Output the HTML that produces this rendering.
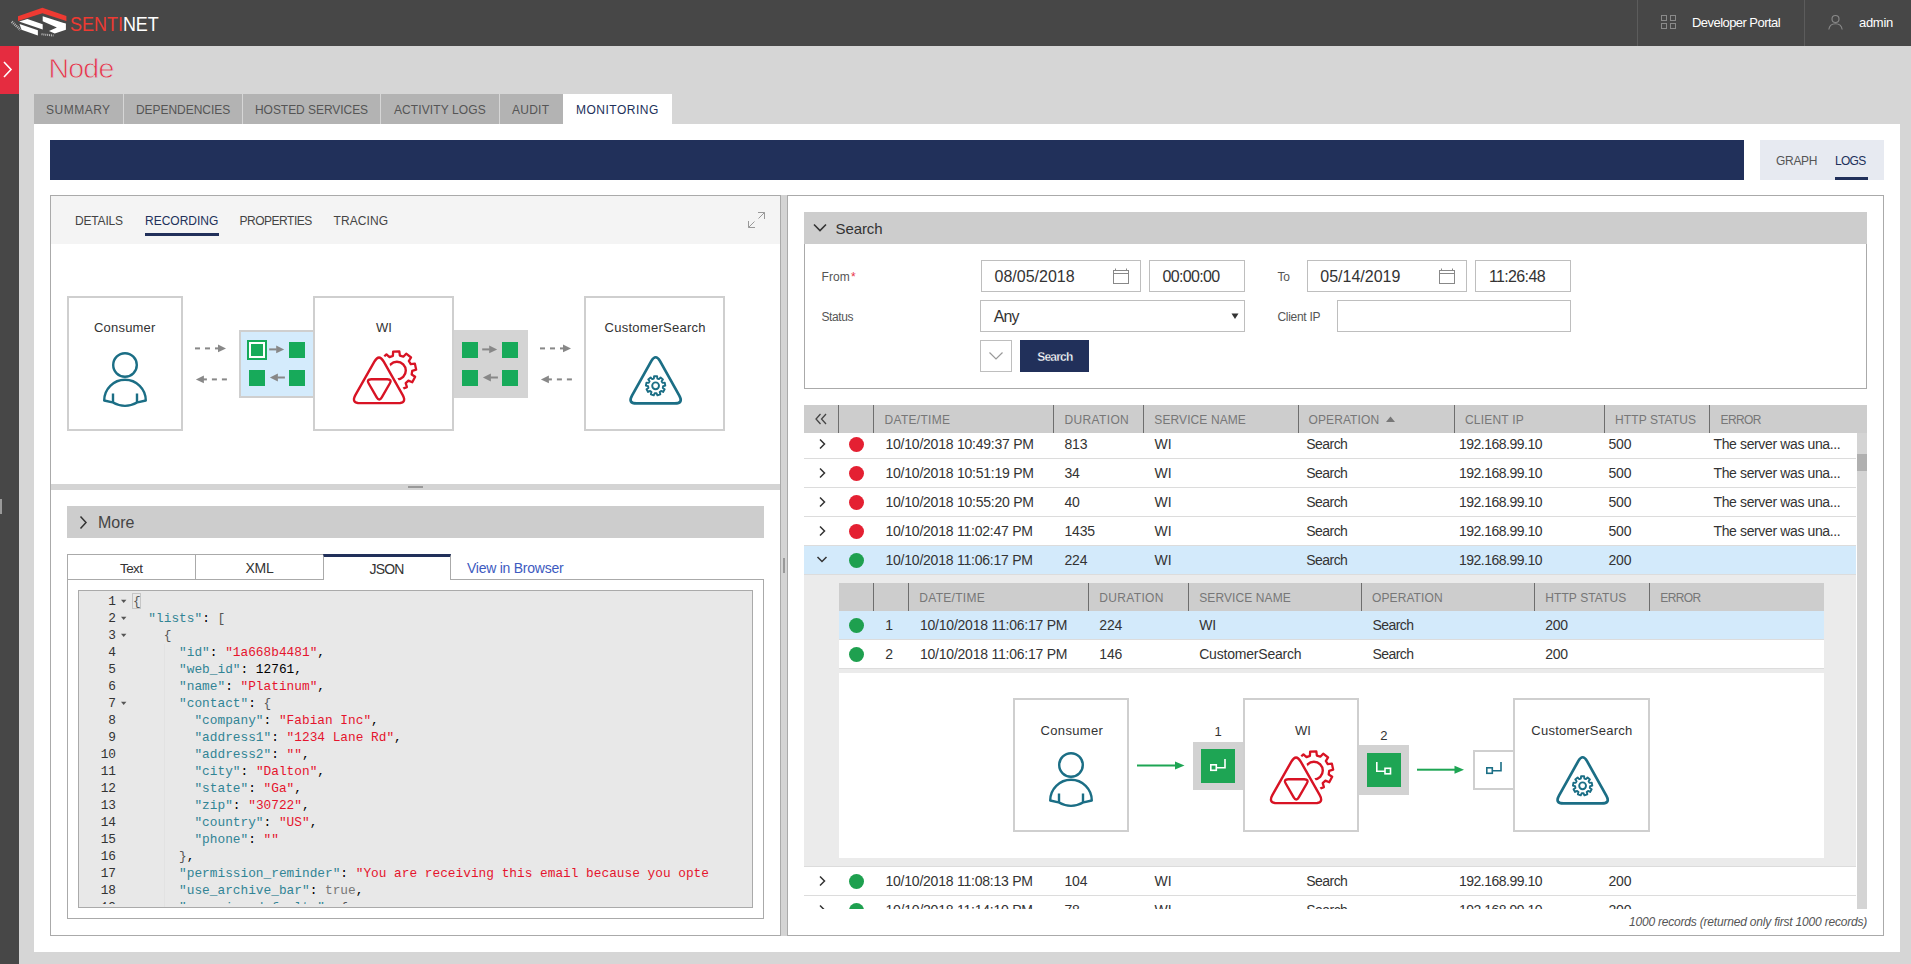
<!DOCTYPE html>
<html><head><meta charset="utf-8">
<style>
*{box-sizing:border-box;margin:0;padding:0}
html,body{width:1911px;height:964px;overflow:hidden;background:#d6d6d6;font-family:"Liberation Sans",sans-serif;color:#333}
.a{position:absolute}
.t{position:absolute;white-space:nowrap;line-height:1}
svg{position:absolute;overflow:visible}
#hdr{left:0;top:0;width:1911px;height:46px;background:#474747}
#side{left:0;top:46px;width:19px;height:918px;background:#474747}
#sidered{left:0;top:46px;width:19px;height:48px;background:#e52c40}
.tab{position:absolute;top:94px;height:30px;background:#b3b3b3;color:#555;font-size:12px;letter-spacing:0.9px}
.tab span{position:absolute;top:10px;line-height:1;white-space:nowrap}
#white{left:34px;top:124px;width:1866px;height:828px;background:#fff}
#navy{left:50px;top:140px;width:1694px;height:40px;background:#21305a}
#gl{left:1760px;top:140px;width:124px;height:40px;background:#e7eaf1}
#lp{left:50px;top:195px;width:731px;height:741px;border:1px solid #aaa;background:#fff}
#split{left:781px;top:195px;width:6px;height:741px;background:#d4d4d4}
#rp{left:787px;top:195px;width:1097px;height:741px;border:1px solid #aaa;background:#fff}
.k{color:#318495}.s{color:#e5142d}.g{color:#555}.c{color:#777}
.up{font-size:12px;letter-spacing:0.9px;color:#444}
</style></head><body>
<svg width="0" height="0" style="position:absolute;left:0;top:0">
 <defs>
  <symbol id="person" overflow="visible">
   <g fill="none" stroke="#1b6e85" stroke-width="2.4" stroke-linejoin="round">
    <circle cx="58" cy="69" r="11.8"/>
    <path d="M37.2,104.5 A20.8,20.8 0 0 1 78.8,104.5 L70.5,106.3 Q58,113.5 45.5,106.3 Z"/>
    <path d="M46,97.5 V106.3 M70,97.5 V106.3"/>
   </g>
  </symbol>
    <symbol id="wi" overflow="visible">
   <g fill="none" stroke="#d81324" stroke-linejoin="round" stroke-linecap="round">
    <path d="M79.89,59.84 L80.15,55.67 L86.32,55.45 L86.87,59.59 L90.32,60.71 L93.20,57.69 L98.06,61.49 L95.82,65.01 L97.74,68.09 L101.89,67.62 L103.18,73.66 L99.20,74.92 L98.69,78.51 L102.17,80.82 L99.27,86.27 L95.41,84.68 L92.72,87.10 L93.90,91.11 L88.18,93.42 L86.24,89.72 L82.62,89.85 L80.95,93.67 L75.08,91.77 L75.97,87.69 L73.12,85.46 L69.38,87.31 L66.11,82.08 L69.42,79.53 L68.66,75.99 L64.60,75.00 L65.46,68.89 L69.64,69.07 L71.34,65.87 L68.86,62.51 L73.45,58.38 L76.53,61.19 Z" stroke-width="2.3"/>
    <circle cx="83.9" cy="74.6" r="8.9" stroke-width="2.4"/>
    <path d="M70.74,65.56 L89.61,98.84 Q94.30,107.10 84.80,107.10 L47.30,107.10 Q37.80,107.10 42.49,98.84 L61.36,65.56 Q66.05,57.30 70.74,65.56 Z" fill="#fff" stroke="#fff" stroke-width="7.5"/>
    <path d="M70.74,65.56 L89.61,98.84 Q94.30,107.10 84.80,107.10 L47.30,107.10 Q37.80,107.10 42.49,98.84 L61.36,65.56 Q66.05,57.30 70.74,65.56 Z" stroke-width="2.4"/>
    <path d="M58.20,83.20 L74.30,83.20 Q79.30,83.20 76.78,87.52 L68.77,101.28 Q66.25,105.60 63.73,101.28 L55.72,87.52 Q53.20,83.20 58.20,83.20 Z" stroke-width="2.4"/>
   </g>
  </symbol>
  <symbol id="cs" overflow="visible">
   <g fill="none" stroke="#1b6e85" stroke-linejoin="round">
    <path d="M76.04,65.15 L95.31,99.60 Q99.70,107.45 90.70,107.45 L52.60,107.45 Q43.60,107.45 47.99,99.60 L67.26,65.15 Q71.65,57.30 76.04,65.15 Z" stroke-width="2.7"/>
    <g transform="translate(71.6,89.8)" stroke-width="1.9">
     <circle r="3.4"/>
     <path d="M-1.71,-7.30 L-1.55,-9.58 L1.55,-9.58 L1.71,-7.30 L3.38,-6.69 L4.97,-8.33 L7.34,-6.34 L6.01,-4.49 L6.89,-2.95 L9.16,-3.19 L9.70,-0.14 L7.49,0.42 L7.18,2.17 L9.07,3.44 L7.52,6.13 L5.47,5.13 L4.11,6.28 L4.73,8.47 L1.82,9.53 L0.89,7.45 L-0.89,7.45 L-1.82,9.53 L-4.73,8.47 L-4.11,6.28 L-5.47,5.13 L-7.52,6.13 L-9.07,3.44 L-7.18,2.17 L-7.49,0.42 L-9.70,-0.14 L-9.16,-3.19 L-6.89,-2.95 L-6.01,-4.49 L-7.34,-6.34 L-4.97,-8.33 L-3.38,-6.69 Z"/>
    </g>
   </g>
  </symbol>
  <symbol id="dashr" overflow="visible"><g fill="#888"><rect x="0" y="-1" width="5" height="2"/><rect x="10" y="-1" width="5" height="2"/><rect x="20" y="-1" width="4" height="2"/><path d="M23,-3.8 L31,0 L23,3.8 Z"/></g></symbol>
  <symbol id="dashl" overflow="visible"><g fill="#888"><path d="M0,0 L8,-3.9 L8,3.9 Z"/><rect x="7" y="-1" width="4" height="2"/><rect x="16" y="-1" width="5" height="2"/><rect x="26" y="-1" width="5" height="2"/></g></symbol>
  <symbol id="arrr" overflow="visible"><g fill="#888"><rect x="0" y="-1" width="7.5" height="2"/><path d="M7,-3.8 L15,0 L7,3.8 Z"/></g></symbol>
  <symbol id="arrl" overflow="visible"><g fill="#888"><path d="M0,0 L8,-4 L8,4 Z"/><rect x="7.5" y="-1" width="7.5" height="2"/></g></symbol>
 </defs>
</svg>

<!-- HEADER -->
<div class="a" id="hdr"></div>
<svg style="left:0;top:0" width="160" height="46" viewBox="0 0 160 46">
  <polygon points="18,16.3 42.4,7.7 66.4,16.1 66.4,21 42.4,13.3 18,21" fill="#ee3a32"/>
  <polygon points="19,21.6 27.4,18.9 42.7,24.2 42.7,29.4" fill="#fff"/>
  <polygon points="19.5,24 37.9,30.2 37.9,35.4 21.5,29.8" fill="#fff"/>
  <polygon points="42.7,16.3 62.9,22.7 65.9,23.4 65.9,29.8 54.7,33.5 49,31 56.9,27.5 42.7,21.2" fill="#fff"/>
  <path d="M11.8,21.8 L20.5,29.8" stroke="#bdbdbd" stroke-width="2.6" stroke-dasharray="1,0.9"/><path d="M41.5,34.2 L53.5,35.6" stroke="#bdbdbd" stroke-width="2" stroke-dasharray="1,0.9"/>
</svg>
<div class="t" style="left:69.5px;top:12.8px;font-size:21px;transform-origin:0 0;transform:scaleX(0.855);letter-spacing:0px"><span style="color:#ee3a32">SENTI</span><span style="color:#fff">NET</span></div>

<div class="a" style="left:1637px;top:0;width:1px;height:46px;background:#5c5c5c"></div>
<div class="a" style="left:1804px;top:0;width:1px;height:46px;background:#5c5c5c"></div>
<svg style="left:1661px;top:15px" width="16" height="15" viewBox="0 0 16 15">
  <g fill="none" stroke="#8a8a8a" stroke-width="1"><rect x="0.5" y="0.5" width="5" height="5"/><rect x="9.5" y="0.5" width="5" height="5"/><rect x="0.5" y="8.5" width="5" height="5"/><rect x="9.5" y="8.5" width="5" height="5"/></g>
</svg>
<div class="t" style="left:1692px;top:16.2px;font-size:13px;color:#fff;letter-spacing:-0.55px">Developer Portal</div>
<svg style="left:1828px;top:15px" width="16" height="15" viewBox="0 0 16 15">
  <g fill="none" stroke="#8a8a8a" stroke-width="1.1"><circle cx="7.5" cy="4" r="3.5"/><path d="M0.8,14.5 C1.5,10 4,8.7 7.5,8.7 C11,8.7 13.5,10 14.2,14.5"/></g>
</svg>
<div class="t" style="left:1859px;top:16.2px;font-size:13px;color:#fff;letter-spacing:-0.3px">admin</div>

<!-- SIDEBAR -->
<div class="a" id="side"></div>
<div class="a" id="sidered"></div>
<svg style="left:3px;top:61px" width="10" height="18" viewBox="0 0 10 18"><path d="M1,1 L8,8.5 L1,16" fill="none" stroke="#fff" stroke-width="1.6"/></svg>
<div class="a" style="left:0;top:499px;width:2px;height:15px;background:#9a9a9a"></div>

<!-- TITLE -->
<div class="t" style="left:48.5px;top:53.6px;font-size:28.5px;color:#e8334a;letter-spacing:-0.8px;-webkit-text-stroke:0.8px #d6d6d6">Node</div>

<!-- TABS -->
<div class="a" id="white"></div>
<div class="tab" style="left:34px;width:89px;letter-spacing:0.5px"><span style="left:12px">SUMMARY</span></div>
<div class="tab" style="left:124px;width:118px;letter-spacing:-0.05px"><span style="left:12px">DEPENDENCIES</span></div>
<div class="tab" style="left:243px;width:137px;letter-spacing:-0.05px"><span style="left:12px">HOSTED SERVICES</span></div>
<div class="tab" style="left:381px;width:118px;letter-spacing:0.1px"><span style="left:13px">ACTIVITY LOGS</span></div>
<div class="tab" style="left:500px;width:63px;letter-spacing:0.25px"><span style="left:12px">AUDIT</span></div>
<div class="tab" style="left:563px;width:109px;background:#fff;color:#21305a;letter-spacing:0.5px"><span style="left:13px">MONITORING</span></div>

<div class="a" id="navy"></div>
<div class="a" id="gl"></div>
<div class="t up" style="left:1776px;top:155px;color:#555;letter-spacing:-0.3px">GRAPH</div>
<div class="t up" style="left:1835px;top:155px;color:#21305a;letter-spacing:-0.7px">LOGS</div>
<div class="a" style="left:1835px;top:177px;width:33px;height:3px;background:#21305a"></div>

<div class="a" id="lp"></div>
<div class="a" id="split"></div>
<div class="a" style="left:783px;top:558px;width:2px;height:15px;background:#999"></div>
<div class="a" id="rp"></div>
<!-- LEFT PANEL -->
<div class="a" style="left:51px;top:196px;width:729px;height:48px;background:#f4f4f4"></div>
<div class="t up" style="left:75px;top:214.5px;letter-spacing:-0.18px">DETAILS</div>
<div class="t up" style="left:145px;top:214.5px;color:#21305a;letter-spacing:0px">RECORDING</div>
<div class="a" style="left:145px;top:233px;width:74px;height:3px;background:#21305a"></div>
<div class="t up" style="left:239.5px;top:214.5px;letter-spacing:-0.48px">PROPERTIES</div>
<div class="t up" style="left:333.5px;top:214.5px;letter-spacing:0.1px">TRACING</div>
<svg style="left:747px;top:211px" width="19" height="18" viewBox="0 0 19 18"><g fill="none" stroke="#999" stroke-width="1"><path d="M11,1.5 H17.5 V8 M17.5,1.5 L11.5,7.5"/><path d="M1.5,10 V16.5 H8 M1.5,16.5 L7.5,10.5"/></g></svg>

<!-- graph -->
<div class="a" style="left:67px;top:296px;width:116px;height:135px;border:2px solid #cfcfcf;background:#fff"></div>
<div class="t" style="left:94px;top:321px;font-size:13px;letter-spacing:0.2px;color:#333">Consumer</div>
<svg style="left:67px;top:296px" width="116" height="135"><use href="#person"/></svg>

<svg style="left:190px;top:340px" width="45" height="45" viewBox="0 0 45 45"><use href="#dashr" x="5" y="8.4"/><use href="#dashl" x="5.9" y="39.4"/></svg>

<div class="a" style="left:239px;top:330px;width:76px;height:68px;border:2px solid #cfcfcf;border-right:none;background:#d4ebfc"></div>
<div class="a" style="left:247px;top:340px;width:20px;height:20px;border:2px solid #17aa5a;background:#fff;padding:2px"><div style="width:12px;height:12px;background:#17aa5a"></div></div>
<div class="a" style="left:289px;top:342px;width:16px;height:16px;background:#17aa5a"></div>
<div class="a" style="left:249px;top:370px;width:16px;height:16px;background:#17aa5a"></div>
<div class="a" style="left:289px;top:370px;width:16px;height:16px;background:#17aa5a"></div>
<svg style="left:265px;top:340px" width="24" height="46" viewBox="0 0 24 46"><use href="#arrr" x="4.2" y="9.4"/><use href="#arrl" x="4.9" y="37.5"/></svg>

<div class="a" style="left:313px;top:296px;width:141px;height:135px;border:2px solid #cfcfcf;background:#fff"></div>
<div class="t" style="left:376px;top:321px;font-size:13px;color:#333">WI</div>
<svg style="left:313px;top:296px" width="141" height="135"><use href="#wi"/></svg>

<div class="a" style="left:454px;top:330px;width:74px;height:68px;background:#d4d4d4"></div>
<div class="a" style="left:462px;top:342px;width:16px;height:16px;background:#17aa5a"></div>
<div class="a" style="left:502px;top:342px;width:16px;height:16px;background:#17aa5a"></div>
<div class="a" style="left:462px;top:370px;width:16px;height:16px;background:#17aa5a"></div>
<div class="a" style="left:502px;top:370px;width:16px;height:16px;background:#17aa5a"></div>
<svg style="left:478px;top:340px" width="24" height="46" viewBox="0 0 24 46"><use href="#arrr" x="4.2" y="9.4"/><use href="#arrl" x="4.9" y="37.5"/></svg>

<svg style="left:535px;top:340px" width="45" height="45" viewBox="0 0 45 45"><use href="#dashr" x="5" y="8.4"/><use href="#dashl" x="5.9" y="39.4"/></svg>

<div class="a" style="left:584px;top:296px;width:141px;height:135px;border:2px solid #cfcfcf;background:#fff"></div>
<div class="t" style="left:604.5px;top:321px;font-size:13px;letter-spacing:0.27px;color:#333">CustomerSearch</div>
<svg style="left:584px;top:296px" width="141" height="135"><use href="#cs"/></svg>

<!-- splitter -->
<div class="a" style="left:51px;top:484px;width:729px;height:6px;background:#d4d4d4"></div>
<div class="a" style="left:408px;top:486px;width:15px;height:2px;background:#999"></div>

<!-- More -->
<div class="a" style="left:67px;top:506px;width:697px;height:32px;background:#cdcdcd"></div>
<svg style="left:78px;top:515px" width="10" height="15" viewBox="0 0 10 15"><path d="M2.5,1.5 L8,7.5 L2.5,13.5" fill="none" stroke="#333" stroke-width="1.5"/></svg>
<div class="t" style="left:98px;top:515px;font-size:16px;color:#444">More</div>

<!-- format tabs -->
<div class="a" style="left:67px;top:579px;width:697px;height:340px;border:1px solid #aaa"></div>
<div class="a" style="left:67px;top:554px;width:129px;height:26px;border:1px solid #aaa;background:#fff"></div>
<div class="a" style="left:195px;top:554px;width:129px;height:26px;border:1px solid #aaa;background:#fff"></div>
<div class="a" style="left:323px;top:554px;width:128px;height:26px;border:1px solid #aaa;border-top:3px solid #21305a;border-bottom:none;background:#fff"></div>
<div class="t" style="left:120px;top:561px;font-size:14px;color:#333;letter-spacing:-0.6px;font-size:13.5px;top:561.5px">Text</div>
<div class="t" style="left:245.5px;top:561px;font-size:14px;color:#333;letter-spacing:-0.3px">XML</div>
<div class="t" style="left:369.5px;top:561.5px;font-size:14px;color:#333;letter-spacing:-0.8px">JSON</div>
<div class="t" style="left:467px;top:560.5px;font-size:14px;color:#3d5ac0;letter-spacing:-0.25px">View in Browser</div>

<!-- editor -->
<div class="a" style="left:78px;top:590px;width:675px;height:318px;border:1px solid #aaa;background:#e8e8e8;overflow:hidden">
 <div class="a" style="left:85px;top:53px;width:1px;height:263px;background:#e2e2e2"></div>
 <svg style="left:41.5px;top:0" width="8" height="130" viewBox="0 0 8 130"><g fill="#555"><path d="M0,8.8 L5.4,8.8 L2.7,12.0 Z"/><path d="M0,25.8 L5.4,25.8 L2.7,29.0 Z"/><path d="M0,42.8 L5.4,42.8 L2.7,46.0 Z"/><path d="M0,110.8 L5.4,110.8 L2.7,114.0 Z"/></g></svg>
 <div class="a" style="left:53px;top:1.5px;width:8.5px;height:16px;border:1px solid #c6c6c6"></div>
 <div class="a" style="left:0;top:0;width:673px;height:313px;overflow:hidden"><pre id="gut" class="a" style="left:0;top:2px;width:37px;text-align:right;font-family:'Liberation Mono',monospace;font-size:12.8px;line-height:17px;color:#333">1
2
3
4
5
6
7
8
9
10
11
12
13
14
15
16
17
18
19</pre>
 <pre id="code" class="a" style="left:54px;top:2px;font-family:'Liberation Mono',monospace;font-size:12.8px;line-height:17px;color:#000"><span class="g">{</span>
  <span class="k">"lists"</span>: <span class="g">[</span>
    <span class="g">{</span>
      <span class="k">"id"</span>: <span class="s">"1a668b4481"</span>,
      <span class="k">"web_id"</span>: 12761,
      <span class="k">"name"</span>: <span class="s">"Platinum"</span>,
      <span class="k">"contact"</span>: <span class="g">{</span>
        <span class="k">"company"</span>: <span class="s">"Fabian Inc"</span>,
        <span class="k">"address1"</span>: <span class="s">"1234 Lane Rd"</span>,
        <span class="k">"address2"</span>: <span class="s">""</span>,
        <span class="k">"city"</span>: <span class="s">"Dalton"</span>,
        <span class="k">"state"</span>: <span class="s">"Ga"</span>,
        <span class="k">"zip"</span>: <span class="s">"30722"</span>,
        <span class="k">"country"</span>: <span class="s">"US"</span>,
        <span class="k">"phone"</span>: <span class="s">""</span>
      <span class="g">}</span>,
      <span class="k">"permission_reminder"</span>: <span class="s">"You are receiving this email because you opte</span>
      <span class="k">"use_archive_bar"</span>: <span class="c">true</span>,
      <span class="k">"campaign_defaults"</span>: <span class="g">{</span></pre></div>
</div>

<!-- RIGHT PANEL -->
<div class="a" style="left:804px;top:212px;width:1063px;height:32px;background:#cdcdcd"></div>
<svg style="left:812px;top:222px" width="16" height="11" viewBox="0 0 16 11"><path d="M2,2.5 L8,8.5 L14,2.5" fill="none" stroke="#333" stroke-width="1.6"/></svg>
<div class="t" style="left:835.5px;top:221.10px;font-size:15px;color:#333;letter-spacing:-0.1px">Search</div>
<div class="a" style="left:804px;top:244px;width:1063px;height:145px;border:1px solid #aaa;border-top:none"></div>
<div class="t" style="left:821.5px;top:271.24px;font-size:12px;color:#555;letter-spacing:0.1px">From</div>
<div class="t" style="left:851px;top:271.24px;font-size:12px;color:#e8334a;">*</div>
<div class="a" style="left:981px;top:260px;width:160px;height:32px;border:1px solid #bebebe;background:#fff"></div>
<div class="t" style="left:994.5px;top:268.66px;font-size:16px;color:#333;">08/05/2018</div>
<svg style="left:1113px;top:268px" width="17" height="16" viewBox="0 0 17 16"><g fill="none" stroke="#888" stroke-width="1"><rect x="0.5" y="2.5" width="15" height="13"/><path d="M0.5,5.5 H15.5 M2.5,0.5 V3 M13.5,0.5 V3"/></g></svg>
<div class="a" style="left:1149px;top:260px;width:96px;height:32px;border:1px solid #bebebe;background:#fff"></div>
<div class="t" style="left:1162.5px;top:268.66px;font-size:16px;color:#333;letter-spacing:-0.65px">00:00:00</div>
<div class="t" style="left:1277.5px;top:271.04px;font-size:12px;color:#555;letter-spacing:-0.3px">To</div>
<div class="a" style="left:1307px;top:260px;width:160px;height:32px;border:1px solid #bebebe;background:#fff"></div>
<div class="t" style="left:1320.3px;top:268.66px;font-size:16px;color:#333;">05/14/2019</div>
<svg style="left:1439px;top:268px" width="17" height="16" viewBox="0 0 17 16"><g fill="none" stroke="#888" stroke-width="1"><rect x="0.5" y="2.5" width="15" height="13"/><path d="M0.5,5.5 H15.5 M2.5,0.5 V3 M13.5,0.5 V3"/></g></svg>
<div class="a" style="left:1475px;top:260px;width:96px;height:32px;border:1px solid #bebebe;background:#fff"></div>
<div class="t" style="left:1489px;top:268.66px;font-size:16px;color:#333;letter-spacing:-0.65px">11:26:48</div>
<div class="t" style="left:821.5px;top:311.04px;font-size:12px;color:#555;letter-spacing:-0.4px">Status</div>
<div class="a" style="left:980px;top:300px;width:265px;height:32px;border:1px solid #bebebe;background:#fff"></div>
<div class="t" style="left:993.8px;top:309.46px;font-size:16px;color:#333;letter-spacing:-0.9px">Any</div>
<svg style="left:1231px;top:312px" width="8" height="8" viewBox="0 0 8 8"><path d="M0.5,1.5 L7.5,1.5 L4,7 Z" fill="#333"/></svg>
<div class="t" style="left:1277.5px;top:311.04px;font-size:12px;color:#555;letter-spacing:-0.3px">Client IP</div>
<div class="a" style="left:1337px;top:300px;width:234px;height:32px;border:1px solid #bebebe;background:#fff"></div>
<div class="a" style="left:980px;top:340px;width:32px;height:32px;border:1px solid #bebebe;background:#fff"></div>
<svg style="left:988px;top:350px" width="16" height="12" viewBox="0 0 16 12"><path d="M1.5,2.5 L8,9 L14.5,2.5" fill="none" stroke="#999" stroke-width="1.2"/></svg>
<div class="a" style="left:1020px;top:340px;width:69px;height:32px;background:#21305a"></div>
<div class="t" style="left:1037.3px;top:350.84px;font-size:12px;color:#fff;font-weight:bold;letter-spacing:-0.8px;-webkit-text-stroke:0.3px #21305a">Search</div>
<div class="a" style="left:804px;top:405px;width:1063px;height:28px;background:#cdcdcd"></div>
<div class="a" style="left:838px;top:405px;width:1px;height:28px;background:#6e6e6e"></div>
<div class="a" style="left:873px;top:405px;width:1px;height:28px;background:#6e6e6e"></div>
<div class="a" style="left:1053px;top:405px;width:1px;height:28px;background:#6e6e6e"></div>
<div class="a" style="left:1143px;top:405px;width:1px;height:28px;background:#6e6e6e"></div>
<div class="a" style="left:1298px;top:405px;width:1px;height:28px;background:#6e6e6e"></div>
<div class="a" style="left:1454px;top:405px;width:1px;height:28px;background:#6e6e6e"></div>
<div class="a" style="left:1604px;top:405px;width:1px;height:28px;background:#6e6e6e"></div>
<div class="a" style="left:1709px;top:405px;width:1px;height:28px;background:#6e6e6e"></div>
<svg style="left:814px;top:413px" width="14" height="12" viewBox="0 0 14 12"><g fill="none" stroke="#444" stroke-width="1.3"><path d="M6.5,1 L2,6 L6.5,11 M12,1 L7.5,6 L12,11"/></g></svg>
<div class="t" style="left:884.5px;top:413.74px;font-size:12px;color:#777;letter-spacing:0.3px">DATE/TIME</div>
<div class="t" style="left:1064.5px;top:413.74px;font-size:12px;color:#777;letter-spacing:0.35px">DURATION</div>
<div class="t" style="left:1154.3px;top:413.74px;font-size:12px;color:#777;letter-spacing:0.1px">SERVICE NAME</div>
<div class="t" style="left:1308.5px;top:413.74px;font-size:12px;color:#777;letter-spacing:0.1px">OPERATION</div>
<div class="t" style="left:1465px;top:413.74px;font-size:12px;color:#777;letter-spacing:0.2px">CLIENT IP</div>
<div class="t" style="left:1615px;top:413.74px;font-size:12px;color:#777;letter-spacing:0.1px">HTTP STATUS</div>
<div class="t" style="left:1720.5px;top:413.74px;font-size:12px;color:#777;letter-spacing:-0.6px">ERROR</div>
<svg style="left:1385px;top:415px" width="11" height="8" viewBox="0 0 11 8"><path d="M1,7 L5.5,1.5 L10,7 Z" fill="#777"/></svg>
<div class="a" style="left:804px;top:433px;width:1052px;height:476px;overflow:hidden">
<div class="a" style="left:0px;top:25px;width:1052px;height:1px;background:#dcdcdc"></div>
<svg style="left:14px;top:5px" width="9" height="12" viewBox="0 0 9 12"><path d="M2,1.5 L6.5,6 L2,10.5" fill="none" stroke="#333" stroke-width="1.5"/></svg>
<div class="a" style="left:45.0px;top:3.5px;width:15px;height:15px;border-radius:50%;background:#e42032"></div>
<div class="t" style="left:81.50px;top:3.85px;font-size:14px;color:#333;letter-spacing:-0.23px">10/10/2018 10:49:37 PM</div>
<div class="t" style="left:260.50px;top:3.85px;font-size:14px;color:#333;letter-spacing:-0.2px">813</div>
<div class="t" style="left:350.50px;top:3.85px;font-size:14px;color:#333;">WI</div>
<div class="t" style="left:502.30px;top:3.85px;font-size:14px;color:#333;letter-spacing:-0.55px">Search</div>
<div class="t" style="left:655.00px;top:3.85px;font-size:14px;color:#333;letter-spacing:-0.5px">192.168.99.10</div>
<div class="t" style="left:804.50px;top:3.85px;font-size:14px;color:#333;letter-spacing:-0.2px">500</div>
<div class="t" style="left:909.50px;top:3.85px;font-size:14px;color:#333;letter-spacing:-0.37px">The server was una...</div>
<div class="a" style="left:0px;top:54px;width:1052px;height:1px;background:#dcdcdc"></div>
<svg style="left:14px;top:34px" width="9" height="12" viewBox="0 0 9 12"><path d="M2,1.5 L6.5,6 L2,10.5" fill="none" stroke="#333" stroke-width="1.5"/></svg>
<div class="a" style="left:45.0px;top:32.5px;width:15px;height:15px;border-radius:50%;background:#e42032"></div>
<div class="t" style="left:81.50px;top:32.85px;font-size:14px;color:#333;letter-spacing:-0.23px">10/10/2018 10:51:19 PM</div>
<div class="t" style="left:260.50px;top:32.85px;font-size:14px;color:#333;letter-spacing:-0.2px">34</div>
<div class="t" style="left:350.50px;top:32.85px;font-size:14px;color:#333;">WI</div>
<div class="t" style="left:502.30px;top:32.85px;font-size:14px;color:#333;letter-spacing:-0.55px">Search</div>
<div class="t" style="left:655.00px;top:32.85px;font-size:14px;color:#333;letter-spacing:-0.5px">192.168.99.10</div>
<div class="t" style="left:804.50px;top:32.85px;font-size:14px;color:#333;letter-spacing:-0.2px">500</div>
<div class="t" style="left:909.50px;top:32.85px;font-size:14px;color:#333;letter-spacing:-0.37px">The server was una...</div>
<div class="a" style="left:0px;top:83px;width:1052px;height:1px;background:#dcdcdc"></div>
<svg style="left:14px;top:63px" width="9" height="12" viewBox="0 0 9 12"><path d="M2,1.5 L6.5,6 L2,10.5" fill="none" stroke="#333" stroke-width="1.5"/></svg>
<div class="a" style="left:45.0px;top:61.5px;width:15px;height:15px;border-radius:50%;background:#e42032"></div>
<div class="t" style="left:81.50px;top:61.85px;font-size:14px;color:#333;letter-spacing:-0.23px">10/10/2018 10:55:20 PM</div>
<div class="t" style="left:260.50px;top:61.85px;font-size:14px;color:#333;letter-spacing:-0.2px">40</div>
<div class="t" style="left:350.50px;top:61.85px;font-size:14px;color:#333;">WI</div>
<div class="t" style="left:502.30px;top:61.85px;font-size:14px;color:#333;letter-spacing:-0.55px">Search</div>
<div class="t" style="left:655.00px;top:61.85px;font-size:14px;color:#333;letter-spacing:-0.5px">192.168.99.10</div>
<div class="t" style="left:804.50px;top:61.85px;font-size:14px;color:#333;letter-spacing:-0.2px">500</div>
<div class="t" style="left:909.50px;top:61.85px;font-size:14px;color:#333;letter-spacing:-0.37px">The server was una...</div>
<div class="a" style="left:0px;top:112px;width:1052px;height:1px;background:#dcdcdc"></div>
<svg style="left:14px;top:92px" width="9" height="12" viewBox="0 0 9 12"><path d="M2,1.5 L6.5,6 L2,10.5" fill="none" stroke="#333" stroke-width="1.5"/></svg>
<div class="a" style="left:45.0px;top:90.5px;width:15px;height:15px;border-radius:50%;background:#e42032"></div>
<div class="t" style="left:81.50px;top:90.85px;font-size:14px;color:#333;letter-spacing:-0.23px">10/10/2018 11:02:47 PM</div>
<div class="t" style="left:260.50px;top:90.85px;font-size:14px;color:#333;letter-spacing:-0.2px">1435</div>
<div class="t" style="left:350.50px;top:90.85px;font-size:14px;color:#333;">WI</div>
<div class="t" style="left:502.30px;top:90.85px;font-size:14px;color:#333;letter-spacing:-0.55px">Search</div>
<div class="t" style="left:655.00px;top:90.85px;font-size:14px;color:#333;letter-spacing:-0.5px">192.168.99.10</div>
<div class="t" style="left:804.50px;top:90.85px;font-size:14px;color:#333;letter-spacing:-0.2px">500</div>
<div class="t" style="left:909.50px;top:90.85px;font-size:14px;color:#333;letter-spacing:-0.37px">The server was una...</div>
<div class="a" style="left:0px;top:113px;width:1052px;height:28px;background:#d3eafb"></div>
<div class="a" style="left:0px;top:141px;width:1052px;height:1px;background:#dcdcdc"></div>
<svg style="left:12px;top:122px" width="12" height="9" viewBox="0 0 12 9"><path d="M1.5,2 L6,6.5 L10.5,2" fill="none" stroke="#333" stroke-width="1.5"/></svg>
<div class="a" style="left:45.0px;top:119.5px;width:15px;height:15px;border-radius:50%;background:#1ea04f"></div>
<div class="t" style="left:81.50px;top:119.85px;font-size:14px;color:#333;letter-spacing:-0.23px">10/10/2018 11:06:17 PM</div>
<div class="t" style="left:260.50px;top:119.85px;font-size:14px;color:#333;letter-spacing:-0.2px">224</div>
<div class="t" style="left:350.50px;top:119.85px;font-size:14px;color:#333;">WI</div>
<div class="t" style="left:502.30px;top:119.85px;font-size:14px;color:#333;letter-spacing:-0.55px">Search</div>
<div class="t" style="left:655.00px;top:119.85px;font-size:14px;color:#333;letter-spacing:-0.5px">192.168.99.10</div>
<div class="t" style="left:804.50px;top:119.85px;font-size:14px;color:#333;letter-spacing:-0.2px">200</div>
<div class="a" style="left:0px;top:142px;width:1052px;height:291px;background:#ebebeb"></div>
<div class="a" style="left:35px;top:150px;width:985px;height:28px;background:#cdcdcd"></div>
<div class="a" style="left:69px;top:150px;width:1px;height:28px;background:#6e6e6e"></div>
<div class="a" style="left:104px;top:150px;width:1px;height:28px;background:#6e6e6e"></div>
<div class="a" style="left:284px;top:150px;width:1px;height:28px;background:#6e6e6e"></div>
<div class="a" style="left:384px;top:150px;width:1px;height:28px;background:#6e6e6e"></div>
<div class="a" style="left:557px;top:150px;width:1px;height:28px;background:#6e6e6e"></div>
<div class="a" style="left:730px;top:150px;width:1px;height:28px;background:#6e6e6e"></div>
<div class="a" style="left:845px;top:150px;width:1px;height:28px;background:#6e6e6e"></div>
<div class="t" style="left:115.30px;top:158.74px;font-size:12px;color:#777;letter-spacing:0.3px">DATE/TIME</div>
<div class="t" style="left:295.20px;top:158.74px;font-size:12px;color:#777;letter-spacing:0.35px">DURATION</div>
<div class="t" style="left:395.20px;top:158.74px;font-size:12px;color:#777;letter-spacing:0.1px">SERVICE NAME</div>
<div class="t" style="left:568.00px;top:158.74px;font-size:12px;color:#777;letter-spacing:0.1px">OPERATION</div>
<div class="t" style="left:741.20px;top:158.74px;font-size:12px;color:#777;letter-spacing:0.1px">HTTP STATUS</div>
<div class="t" style="left:856.30px;top:158.74px;font-size:12px;color:#777;letter-spacing:-0.6px">ERROR</div>
<div class="a" style="left:35px;top:178px;width:985px;height:28px;background:#d3eafb"></div>
<div class="a" style="left:35px;top:206px;width:985px;height:1px;background:#dcdcdc"></div>
<div class="a" style="left:35px;top:207px;width:985px;height:28px;background:#fff"></div>
<div class="a" style="left:35px;top:235px;width:985px;height:1px;background:#dcdcdc"></div>
<div class="a" style="left:45.4px;top:184.5px;width:15px;height:15px;border-radius:50%;background:#1ea04f"></div>
<div class="t" style="left:81.30px;top:184.95px;font-size:14px;color:#333;">1</div>
<div class="t" style="left:116.00px;top:184.95px;font-size:14px;color:#333;letter-spacing:-0.23px">10/10/2018 11:06:17 PM</div>
<div class="t" style="left:295.30px;top:184.95px;font-size:14px;color:#333;letter-spacing:-0.2px">224</div>
<div class="t" style="left:395.20px;top:184.95px;font-size:14px;color:#333;letter-spacing:-0.2px">WI</div>
<div class="t" style="left:568.50px;top:184.95px;font-size:14px;color:#333;letter-spacing:-0.55px">Search</div>
<div class="t" style="left:741.20px;top:184.95px;font-size:14px;color:#333;letter-spacing:-0.2px">200</div>
<div class="a" style="left:45.4px;top:213.5px;width:15px;height:15px;border-radius:50%;background:#1ea04f"></div>
<div class="t" style="left:81.30px;top:213.95px;font-size:14px;color:#333;">2</div>
<div class="t" style="left:116.00px;top:213.95px;font-size:14px;color:#333;letter-spacing:-0.23px">10/10/2018 11:06:17 PM</div>
<div class="t" style="left:295.30px;top:213.95px;font-size:14px;color:#333;letter-spacing:-0.2px">146</div>
<div class="t" style="left:395.20px;top:213.95px;font-size:14px;color:#333;letter-spacing:-0.2px">CustomerSearch</div>
<div class="t" style="left:568.50px;top:213.95px;font-size:14px;color:#333;letter-spacing:-0.55px">Search</div>
<div class="t" style="left:741.20px;top:213.95px;font-size:14px;color:#333;letter-spacing:-0.2px">200</div>
<div class="a" style="left:35px;top:240px;width:985px;height:185px;background:#fff"></div>
<!--GRAPH2-->
<div class="a" style="left:209px;top:265px;width:116px;height:134px;border:2px solid #cfcfcf;background:#fff"></div>
<div class="t" style="left:236.50px;top:290.80px;font-size:13px;color:#333;letter-spacing:0.35px">Consumer</div>
<svg style="left:209px;top:263px" width="116" height="135" viewBox="0 0 116 135"><use href="#person"/></svg>
<svg style="left:333px;top:327px" width="50" height="12" viewBox="0 0 50 12"><g fill="#1ea554"><rect x="0" y="4.5" width="40" height="2"/><path d="M38,1.5 L47.5,5.5 L38,9.5 Z"/></g></svg>
<div class="a" style="left:389px;top:309px;width:50px;height:48px;background:#d2d2d2"></div>
<div class="a" style="left:397px;top:316px;width:34px;height:34px;background:#1ea554"></div>
<svg style="left:405px;top:325px" width="18" height="14" viewBox="0 0 18 14"><g fill="none" stroke="#fff" stroke-width="1.6"><rect x="1.8" y="6.8" width="5.5" height="5.5"/><path d="M7.3,9.8 H16 V1"/></g></svg>
<div class="t" style="left:410.50px;top:291.60px;font-size:13px;color:#333;">1</div>
<div class="a" style="left:439px;top:265px;width:116px;height:134px;border:2px solid #cfcfcf;background:#fff"></div>
<div class="t" style="left:491.00px;top:290.80px;font-size:13px;color:#333;">WI</div>
<svg style="left:426px;top:263px" width="141" height="135" viewBox="0 0 141 135"><use href="#wi"/></svg>
<div class="a" style="left:555px;top:312px;width:50px;height:50px;background:#d2d2d2"></div>
<div class="a" style="left:563px;top:320px;width:34px;height:34px;background:#1ea554"></div>
<svg style="left:571px;top:328px" width="18" height="14" viewBox="0 0 18 14"><g fill="none" stroke="#fff" stroke-width="1.6"><path d="M1.8,1 V10.3 H10"/><rect x="10" y="7.3" width="5.5" height="5.5"/></g></svg>
<div class="t" style="left:576.30px;top:295.80px;font-size:13px;color:#333;">2</div>
<svg style="left:613px;top:331px" width="50" height="12" viewBox="0 0 50 12"><g fill="#1ea554"><rect x="0" y="4.7" width="40" height="2"/><path d="M37.5,1.7 L47,5.7 L37.5,9.7 Z"/></g></svg>
<div class="a" style="left:669px;top:317px;width:42px;height:40px;border:2px solid #cfcfcf;border-right:none;background:#fff"></div>
<svg style="left:681px;top:328px" width="18" height="14" viewBox="0 0 18 14"><g fill="none" stroke="#1b6e85" stroke-width="1.6"><rect x="1.8" y="6.8" width="5.5" height="5.5"/><path d="M7.3,9.8 H16 V1"/></g></svg>
<div class="a" style="left:709px;top:265px;width:137px;height:134px;border:2px solid #cfcfcf;background:#fff"></div>
<div class="t" style="left:727.30px;top:290.80px;font-size:13px;color:#333;letter-spacing:0.27px">CustomerSearch</div>
<svg style="left:707px;top:263px" width="141" height="135" viewBox="0 0 141 135"><use href="#cs"/></svg>
<!--/GRAPH2-->
<div class="a" style="left:0px;top:433px;width:1052px;height:1px;background:#dcdcdc"></div>
<svg style="left:14px;top:442px" width="9" height="12" viewBox="0 0 9 12"><path d="M2,1.5 L6.5,6 L2,10.5" fill="none" stroke="#333" stroke-width="1.5"/></svg>
<div class="a" style="left:45.0px;top:440.5px;width:15px;height:15px;border-radius:50%;background:#1ea04f"></div>
<div class="t" style="left:81.50px;top:440.85px;font-size:14px;color:#333;letter-spacing:-0.23px">10/10/2018 11:08:13 PM</div>
<div class="t" style="left:260.50px;top:440.85px;font-size:14px;color:#333;letter-spacing:-0.2px">104</div>
<div class="t" style="left:350.50px;top:440.85px;font-size:14px;color:#333;">WI</div>
<div class="t" style="left:502.30px;top:440.85px;font-size:14px;color:#333;letter-spacing:-0.55px">Search</div>
<div class="t" style="left:655.00px;top:440.85px;font-size:14px;color:#333;letter-spacing:-0.5px">192.168.99.10</div>
<div class="t" style="left:804.50px;top:440.85px;font-size:14px;color:#333;letter-spacing:-0.2px">200</div>
<div class="a" style="left:0px;top:462px;width:1052px;height:1px;background:#dcdcdc"></div>
<svg style="left:14px;top:471px" width="9" height="12" viewBox="0 0 9 12"><path d="M2,1.5 L6.5,6 L2,10.5" fill="none" stroke="#333" stroke-width="1.5"/></svg>
<div class="a" style="left:45.0px;top:469.5px;width:15px;height:15px;border-radius:50%;background:#1ea04f"></div>
<div class="t" style="left:81.50px;top:469.85px;font-size:14px;color:#333;letter-spacing:-0.23px">10/10/2018 11:14:10 PM</div>
<div class="t" style="left:260.50px;top:469.85px;font-size:14px;color:#333;letter-spacing:-0.2px">78</div>
<div class="t" style="left:350.50px;top:469.85px;font-size:14px;color:#333;">WI</div>
<div class="t" style="left:502.30px;top:469.85px;font-size:14px;color:#333;letter-spacing:-0.55px">Search</div>
<div class="t" style="left:655.00px;top:469.85px;font-size:14px;color:#333;letter-spacing:-0.5px">192.168.99.10</div>
<div class="t" style="left:804.50px;top:469.85px;font-size:14px;color:#333;letter-spacing:-0.2px">200</div>
</div>
<div class="a" style="left:1857px;top:433px;width:10px;height:476px;background:#d4d4d4"></div>
<div class="a" style="left:1857px;top:454px;width:10px;height:17px;background:#b0b0b0"></div>
<div class="t" style="left:1629px;top:916.04px;font-size:12px;color:#555;font-style:italic;letter-spacing:-0.2px">1000 records (returned only first 1000 records)</div>
</body></html>
